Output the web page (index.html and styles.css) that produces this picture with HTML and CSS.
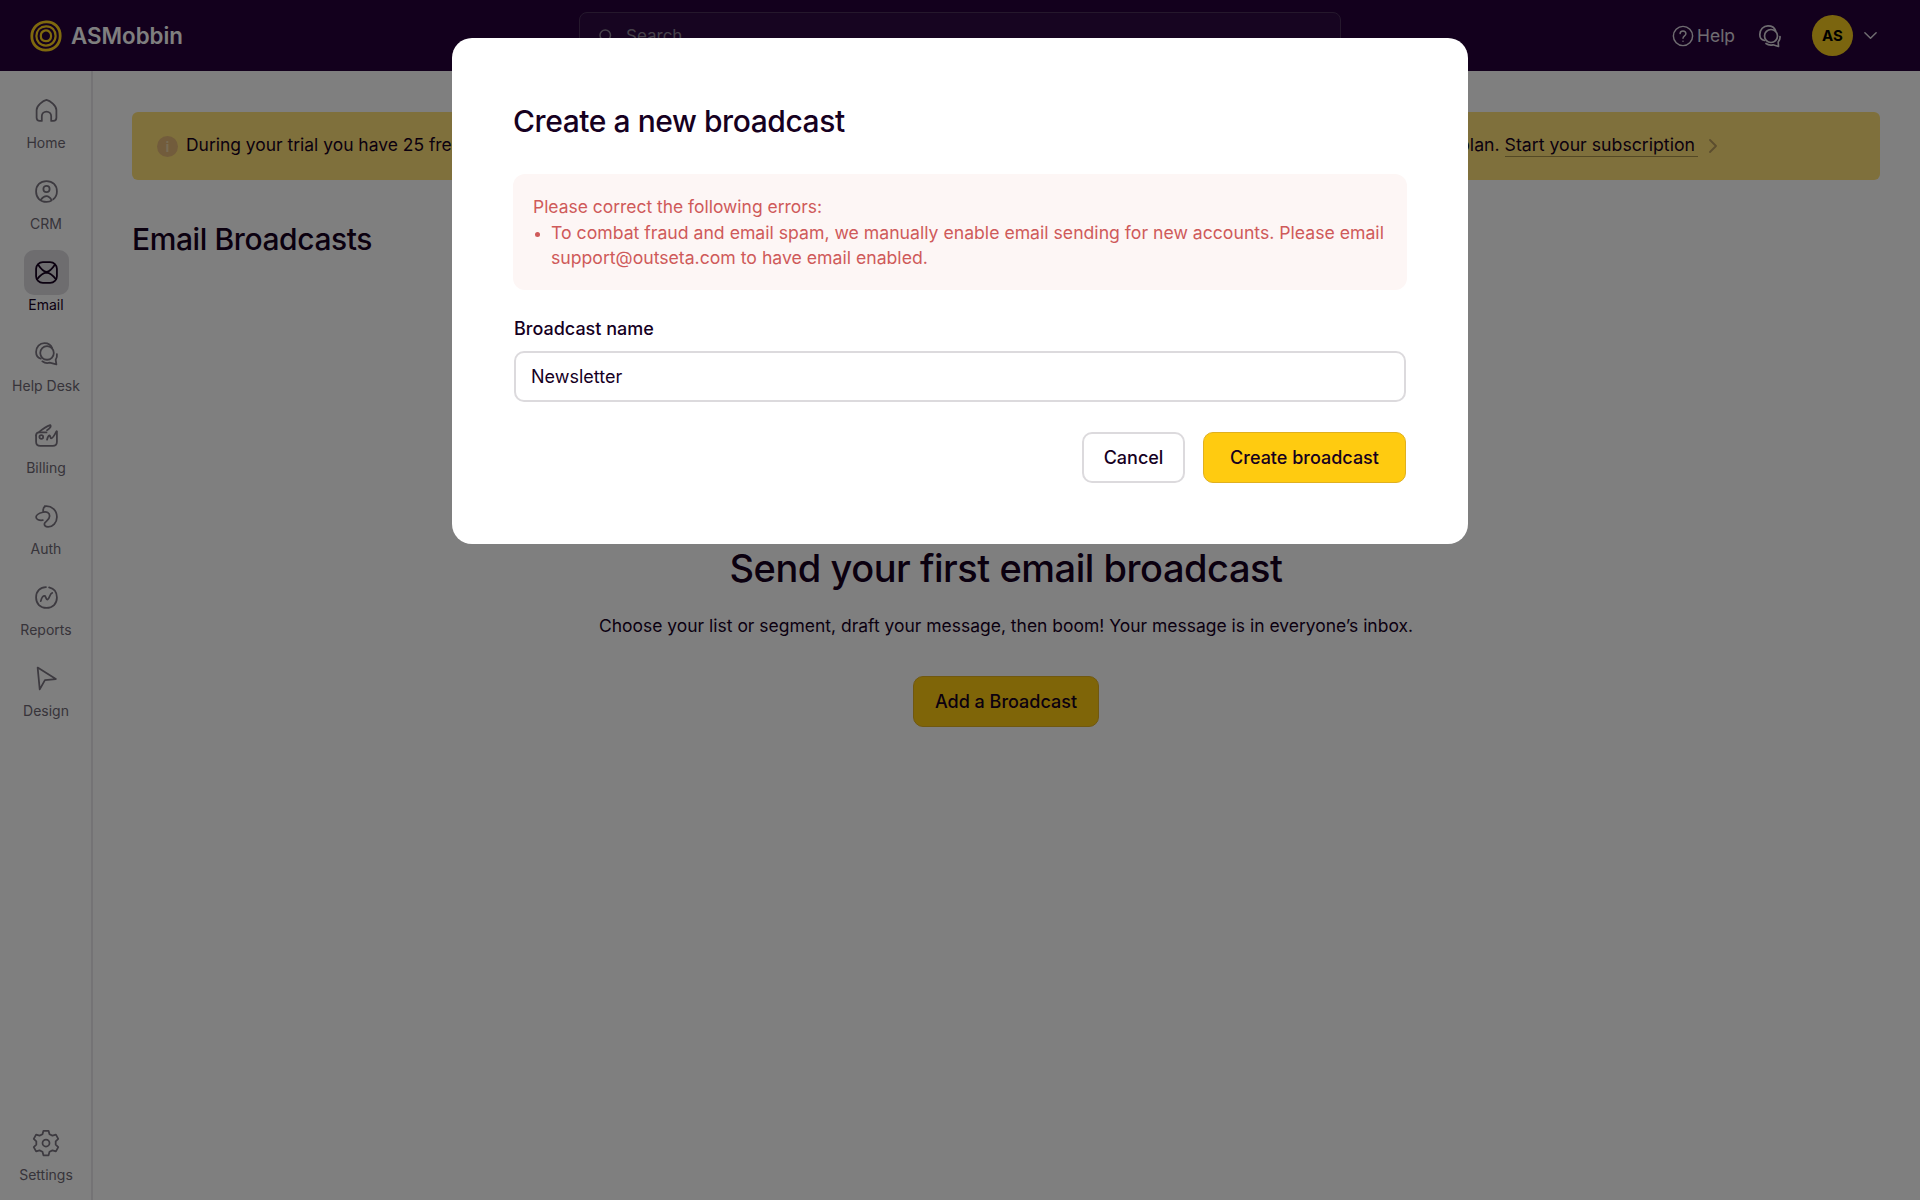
FILE: index.html
```html
<!DOCTYPE html>
<html lang="en">
<head>
<meta charset="utf-8">
<title>Email Broadcasts</title>
<link rel="stylesheet" href="styles.css">
</head>
<body>
<div class="app">
  <header class="topbar">
    <div class="brand">
      <svg class="logo" viewBox="0 0 32 32" fill="none" stroke="#ffd21c">
        <path stroke-width="2.800" d="M16 1.800C24 1.400 30.300 7.500 30.200 16 30.100 24.500 24 30.400 15.500 30.200 7.500 30 1.700 24 1.800 16 1.900 8 8 2.200 16 1.800Z"/>
        <path stroke-width="2.200" d="M16 6.400C22 6.200 25.600 10.500 25.600 16 25.500 21.500 21.500 25.700 15.800 25.600 10 25.500 6.400 21.500 6.400 16 6.500 10.500 10.200 6.600 16 6.400Z"/>
        <path stroke-width="2.200" d="M14.500 10.600C18 9.600 21.300 12.500 21.100 16 21 19.500 19 21.200 15.900 21.100 12.800 21 10.800 19.300 10.800 16 10.800 13.500 12 11.400 14.500 10.600Z"/>
      </svg>
      <span class="brand-name">ASMobbin</span>
    </div>
    <div class="search">
      <svg class="search-icon" viewBox="0 0 24 24" fill="none" stroke="#8d8494" stroke-width="2" stroke-linecap="round"><circle cx="11" cy="11" r="7"/><path d="M16.500 16.500L21 21"/></svg>
      <span>Search</span>
    </div>
    <div class="top-actions">
      <span class="help">
        <svg class="help-icon" viewBox="0 0 24 24" fill="none" stroke="#fff" stroke-width="1.600" stroke-linecap="round"><circle cx="12" cy="12" r="10.500"/><path d="M8.800 9.400A3.200 3.200 0 0 1 12 6.500 3.200 3.200 0 0 1 15.200 9.600C15.200 11.800 12 12 12 14.400"/><path d="M12 17.600V17.700"/></svg>
        <span>Help</span>
      </span>
      <svg class="chat-icon" viewBox="0 0 24 24" fill="none" stroke="#fff" stroke-width="1.700" stroke-linecap="round" stroke-linejoin="round"><path d="M6.500 16.500C3.500 16 1.800 13.500 1.800 10.500 1.800 5.500 5.500 1.800 10 1.800 13.500 1.800 16.500 3.500 17.500 6.500"/><circle cx="13" cy="12" r="6.500"/><path d="M8 19.500C10 21 12.500 21.300 15 20.800L20.500 22.500 20.200 18C21.500 16.500 22.200 14.500 22 12.500"/></svg>
      <span class="avatar">AS</span>
      <svg class="caret" viewBox="0 0 24 24" fill="none" stroke="#fff" stroke-width="2.400" stroke-linecap="round" stroke-linejoin="round"><path d="M3 7.500L12 16.500 21 7.500"/></svg>
    </div>
  </header>

  <div class="body">
    <nav class="sidebar">
      <div class="nav-list">
        <a class="nav-item">
          <span class="nav-icon"><svg viewBox="0 0 24 24"><path d="M7.500 22H5.500C3.500 22 2.500 20.800 2.500 19V11.500C2.500 7.500 8.500 2.500 12 1.800 15.500 2.500 21.500 7.500 21.500 11.500V19C21.500 20.800 20.500 22 18.500 22H16.500V17.500A4.500 4.500 0 0 0 7.500 17.500Z"/></svg></span>
          <span class="nav-label">Home</span>
        </a>
        <a class="nav-item">
          <span class="nav-icon"><svg viewBox="0 0 24 24"><path d="M18.500 19.500C21 17.500 22 15 22 12 22 6 18 2 12 2 6 2 2 6 2 12 2 18 6 22 12 22 14 22 16 21.500 17 20.500 15.500 17.800 14 16.500 12 16.500 9.500 16.500 8 18 7 19.500"/><circle cx="12" cy="9.500" r="3"/></svg></span>
          <span class="nav-label">CRM</span>
        </a>
        <a class="nav-item active">
          <span class="nav-icon"><svg viewBox="0 0 24 24"><rect x="2" y="2" width="20" height="20" rx="6.500"/><path d="M4 4.500C7 9 9 11.200 12 11.500 15 11.200 17 9 20 4.500"/><path d="M3 18.500C6 14.500 8.500 12.500 12 12.200 15.500 12.500 18 14.500 21 18.500"/></svg></span>
          <span class="nav-label">Email</span>
        </a>
        <a class="nav-item">
          <span class="nav-icon"><svg viewBox="0 0 24 24"><path d="M6.500 17C3.500 16 2 13.500 2 10.500 2 5.500 5.500 2 10 2 13.500 2 16.500 4 17.500 7"/><circle cx="12.500" cy="11.500" r="6.500"/><path d="M8 19.500C10 21 12.500 21.500 15 20.800L21.500 22.500 20.800 18C21.800 16.500 22.300 14.500 22 12.500"/></svg></span>
          <span class="nav-label">Help Desk</span>
        </a>
        <a class="nav-item">
          <span class="nav-icon"><svg viewBox="0 0 24 24"><path d="M5 8.500C8 6 11 3.500 15.500 2 17 3 15 5.500 12.500 7"/><path d="M2 12C2 10.500 3 9 5 9H12"/><path d="M2 12V18C2 20.500 3.500 22 6 22H18C20.500 22 22 20.500 22 18V8"/><circle cx="7" cy="13.500" r="1.800"/><path d="M12.500 16C13 14 14 12 15 12 16 12.500 15.500 14.500 16.500 14.800 18 14.800 20 11 21.500 8"/></svg></span>
          <span class="nav-label">Billing</span>
        </a>
        <a class="nav-item">
          <span class="nav-icon"><svg viewBox="0 0 24 24"><path d="M10.500 2.200C17 1.500 22 6 22 12.500 22 18 18 22 13.500 22 11 22 9.500 20.500 10.200 18.500 10.800 16.800 15 15.500 15 11.500 15 8.500 12 7 9 7.800 6 8.600 2 9.500 2 12.500 2 15 5 16 8.500 15.500"/><path d="M9 7.800C8.500 5.500 9 3.500 10.500 2.200"/></svg></span>
          <span class="nav-label">Auth</span>
        </a>
        <a class="nav-item">
          <span class="nav-icon"><svg viewBox="0 0 24 24"><path d="M14.500 2.300C19 3.300 22 7 22 12 22 18 18 22 12 22 6 22 2 18 2 12 2 6 6 2 11.500 2"/><path d="M6.500 15.500C7.500 11.500 9 10 10.500 10.500 11.500 11.500 11.500 14 13 14 15 13.500 15 8 17.500 7.500"/></svg></span>
          <span class="nav-label">Reports</span>
        </a>
        <a class="nav-item">
          <span class="nav-icon"><svg viewBox="0 0 24 24"><path d="M3.500 1.500L21 12.500 10.500 13.500 5.500 22.500Z"/></svg></span>
          <span class="nav-label">Design</span>
        </a>
      </div>
      <a class="nav-item">
        <span class="nav-icon gear"><svg viewBox="0 0 24 24"><path d="M9.800 1.500H14.200L15 4.500 17.500 5.700 20.500 4.800 22.500 8.500 20.300 10.600V13.400L22.500 15.500 20.500 19.200 17.500 18.300 15 19.500 14.200 22.500H9.800L9 19.500 6.500 18.300 3.500 19.200 1.500 15.500 3.700 13.400V10.600L1.500 8.500 3.500 4.800 6.500 5.700 9 4.500Z"/><circle cx="12" cy="12" r="3"/></svg></span>
        <span class="nav-label">Settings</span>
      </a>
    </nav>

    <main class="content">
      <div class="banner">
        <div class="banner-side">
          <span class="info">i</span>
          <span>During your trial you have 25 free email sends</span>
        </div>
        <div class="banner-side banner-end">
          <span>To send more, choose a plan. <a class="banner-link">Start your subscription</a></span>
          <svg class="chev" viewBox="0 0 10 16" fill="none" stroke="#16001f" stroke-width="1.800" stroke-linecap="round" stroke-linejoin="round"><path d="M2 2L8 8 2 14"/></svg>
        </div>
      </div>
      <h1 class="page-title">Email Broadcasts</h1>
      <section class="empty">
        <h2 class="empty-title">Send your first email broadcast</h2>
        <p class="empty-text">Choose your list or segment, draft your message, then boom! Your message is in everyone’s inbox.</p>
        <button class="btn btn-primary btn-add">Add a Broadcast</button>
      </section>
    </main>
  </div>
</div>

<div class="overlay">
  <div class="modal">
    <h2 class="modal-title">Create a new broadcast</h2>
    <div class="alert">
      <p class="alert-line">Please correct the following errors:</p>
      <ul class="alert-list">
        <li>To combat fraud and email spam, we manually enable email sending for new accounts. Please email support@outseta.com to have email enabled.</li>
      </ul>
    </div>
    <label class="field-label" for="bname">Broadcast name</label>
    <input class="field-input" id="bname" type="text" value="Newsletter">
    <div class="modal-actions">
      <button class="btn btn-ghost">Cancel</button>
      <button class="btn btn-primary btn-wide">Create broadcast</button>
    </div>
  </div>
</div>
</body>
</html>
```

FILE: styles.css
```css
* { box-sizing: border-box; }
html, body { margin: 0; height: 100%; }
body {
  font-family: Inter, "Liberation Sans", sans-serif;
  color: #16001f;
  background: #fff;
  overflow: hidden;
}
.app { height: 1200px; display: flex; flex-direction: column; }

.topbar {
  height: 71px;
  flex: none;
  background: #26003a;
  display: flex;
  align-items: center;
  padding: 0 30px;
}
.brand { display: flex; align-items: center; gap: 9px; width: 549px; }
.logo { width: 32px; height: 32px; }
.brand-name { font-size: 22.300px; font-weight: 600; color: #fff; }
.search {
  width: 762px;
  height: 48px;
  border: 1px solid #4a3159;
  background: #2e0b42;
  border-radius: 8px;
  display: flex;
  align-items: center;
  gap: 11px;
  padding: 0 17px;
  color: #8d8494;
  font-size: 17px;
}
.search-icon { width: 18px; height: 18px; }
.top-actions { display: flex; align-items: center; margin-left: auto; padding-right: 12px; }
.help { display: flex; align-items: center; gap: 3px; color: #fff; font-size: 17.400px; opacity: .85; margin-right: 23px; }
.help-icon { width: 22px; height: 22px; }
.chat-icon { width: 24px; height: 24px; margin-right: 30px; opacity: .85; }
.avatar {
  width: 41px; height: 41px;
  border-radius: 50%;
  background: #f6cb1f;
  display: flex; align-items: center; justify-content: center;
  font-size: 15px; font-weight: 700; color: #000;
  margin-right: 10px;
}
.caret { width: 15px; height: 15px; opacity: .85; }

.body { flex: 1; display: flex; min-height: 0; }
.sidebar {
  width: 93px;
  flex: none;
  border-right: 2px solid #e8e6ea;
  background: #fff;
  padding: 16.500px 0 15px 1px;
  display: flex;
  flex-direction: column;
  justify-content: space-between;
}
.nav-list { display: flex; flex-direction: column; gap: 16.250px; }
.nav-item { display: flex; flex-direction: column; align-items: center; color: #6e6874; }
.nav-icon {
  width: 45px; height: 45px;
  border-radius: 10px;
  display: flex; align-items: center; justify-content: center;
}
.nav-icon svg {
  width: 25px; height: 25px;
  fill: none;
  stroke: #7a7580;
  stroke-width: 1.700;
  stroke-linecap: round;
  stroke-linejoin: round;
}
.nav-icon.gear svg { width: 28px; height: 28px; stroke-width: 1.500; }
.nav-label { font-size: 14px; line-height: 20px; }
.active { color: #16001f; }
.active .nav-icon { background: #dcdadf; }
.active .nav-icon svg { stroke: #16001f; }

.content { flex: 1; padding: 41px 40px 0 39px; min-width: 0; }
.banner {
  height: 68px;
  border-radius: 6px;
  background: #ffe078;
  display: flex;
  align-items: center;
  justify-content: space-between;
  padding: 0 162px 3px 25px;
  font-size: 17.450px;
}
.banner-end { font-size: 17.700px; }
.banner-side { display: flex; align-items: center; gap: 8px; }
.info {
  width: 21px; height: 21px;
  border-radius: 50%;
  background: #e4b878;
  display: flex; align-items: center; justify-content: center;
  color: #f0d8a8;
  font-size: 14px; font-weight: 700;
  margin-top: 3px;
}
.banner-link { border-bottom: 1px solid #a8924a; padding: 0 3px 1px 0; }
.chev { width: 10px; height: 16px; margin-left: 2px; margin-top: 3px; opacity: .3; }
.page-title { font-size: 30px; font-weight: 500; margin: 39px 0 1px; line-height: 40px; letter-spacing: -0.4px; }
.empty { display: flex; flex-direction: column; align-items: center; padding-top: 283px; }
.empty-title { font-size: 38px; font-weight: 500; line-height: 50px; margin: 0; letter-spacing: -0.47px; }
.empty-text { font-size: 17.480px; line-height: 26px; margin: 20px 0 0; }
.btn {
  font-family: inherit;
  font-size: 18px;
  font-weight: 450;
  height: 51px;
  border-radius: 10px;
  color: #16001f;
  padding: 0 20px;
  cursor: pointer;
}
.btn-primary { background: #ffcb10; border: 1.500px solid #e0b020; }
.btn-add { margin-top: 37px; padding: 0 21px; }
.btn-wide { width: 203px; padding: 0; }
.btn-ghost { background: #fff; border: 2px solid #dcdadd; width: 103px; padding: 0; }

.overlay {
  position: fixed;
  inset: 0;
  background: rgba(0, 0, 0, .5);
  display: flex;
  justify-content: center;
  align-items: flex-start;
  padding-top: 38px;
}
.modal {
  width: 1016px;
  height: 506px;
  background: #fff;
  border-radius: 20px;
  padding: 61px;
  display: flex;
  flex-direction: column;
}
.modal-title { font-size: 30px; font-weight: 500; line-height: 42px; margin: 1px 0 -1px; letter-spacing: -0.43px; }
.alert {
  margin-top: 33px;
  height: 116px;
  background: #fdf6f5;
  border-radius: 12px;
  padding: 20px;
  font-size: 17.450px;
  line-height: 25.500px;
  color: #cf5a5a;
}
.alert-line { margin: 0; }
.alert-list { margin: 0; padding: 0 0 0 18px; font-size: 17.650px; }
.alert-list li::marker { font-size: 14px; }
.field-label { margin: 27px 0 0 1px; font-size: 18px; font-weight: 450; line-height: 24px; }
.field-input {
  margin: 10px 1px 0;
  height: 52px;
  border: 2px solid #dcdadd;
  border-radius: 10px;
  padding: 0 15px 1px;
  font: 18px Inter, "Liberation Sans", sans-serif;
  color: #16001f;
  width: 892px;
}
.modal-actions { display: flex; justify-content: flex-end; gap: 18px; margin: 30px 1px 0; }
```
